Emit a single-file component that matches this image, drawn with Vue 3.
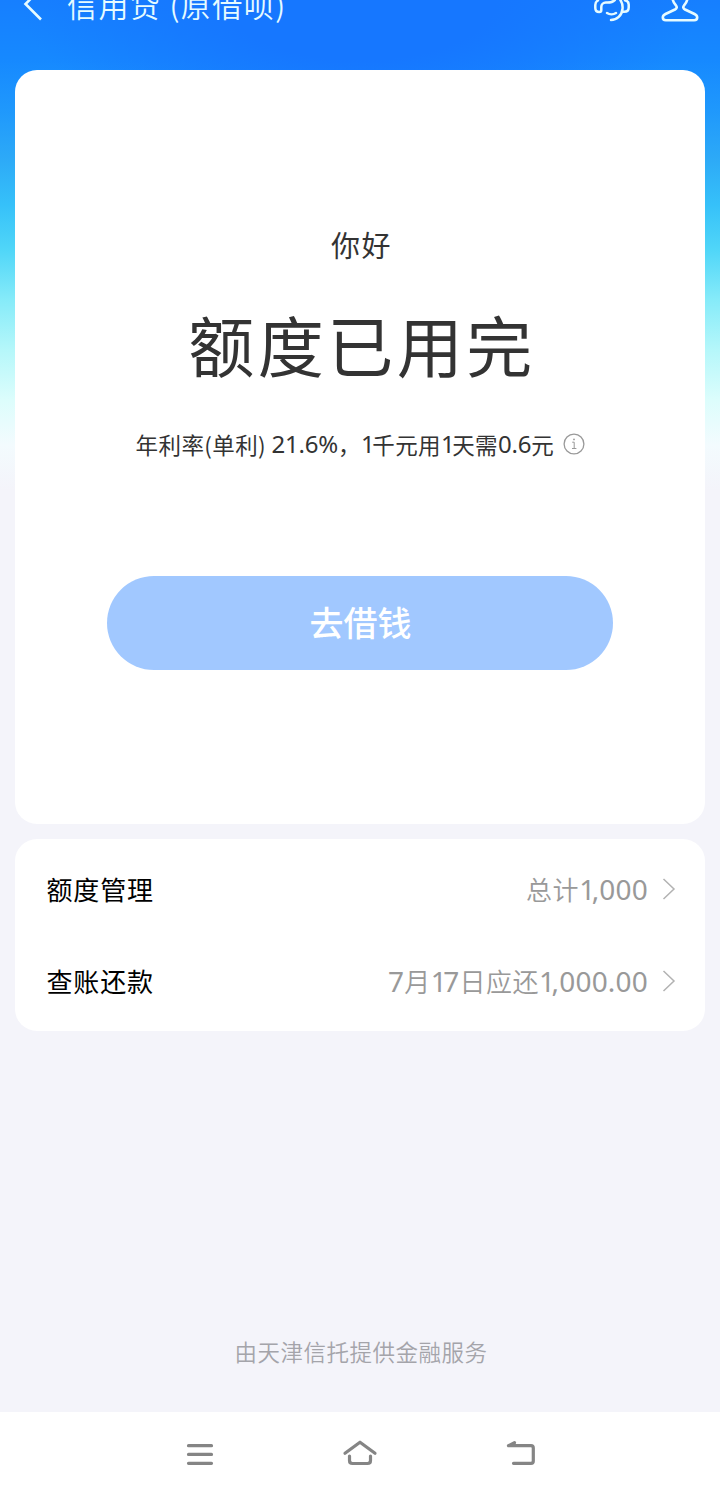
<script setup>
const rows = [
  { label: '额度管理', value: [{ t: '总计' }, { t: '1', one: true }, { t: ',000', num: true }] },
  {
    label: '查账还款',
    value: [
      { t: '7', num: true }, { t: '月' }, { t: '1', one: true }, { t: '7', num: true }, { t: '日应还' },
      { t: '1', one: true }, { t: ',000.00', num: true },
    ],
  },
]
</script>

<template>
  <div class="page">
    <header class="header">
      <div class="bar">
        <svg class="back" width="24" height="40" viewBox="0 0 24 40" fill="none" stroke="#e6fbff" stroke-width="2.6">
          <path d="M18 4.500 2.500 20 18 35.500" />
        </svg>
        <h1 class="title">信用贷 (原借呗)</h1>
        <svg class="service" width="36" height="24" viewBox="0 0 36 24" fill="none" stroke="#e6fbff" stroke-width="2.500" stroke-linecap="round" stroke-linejoin="round">
          <path d="M4 .5C2 1.500 1.300 3 1.300 5v3c0 2.500 1.700 4 4 4 1.500 0 2-.7 2-2V7c0-2.500 2-4.500 4.500-4.500 3 0 6 .5 9-2.500" />
          <path d="M25.500-1.500c2.500 3.500 3.500 6.500 3 10.500-.7 6.500-5.500 11-11.500 11M28.500 11.800h1.700c2.800 0 4.500-1.800 4.500-4.300V4.500c0-2.200-1.300-3.700-3.700-4.200" />
          <path d="M13 13c2.500 1.700 6.500 1.700 9 0" />
        </svg>
        <svg class="person" width="38" height="24" viewBox="0 0 38 24" fill="none" stroke="#e6fbff" stroke-width="2.600" stroke-linejoin="round">
          <path d="M11.500-2c.3 3 1.500 5.500 3.500 7.500 1.300 1.500.8 3-1 4L4.500 14c-2 1-2.700 2-2.700 3.500 0 1.800 1 2.700 3 2.700h28.400c2 0 3-.9 3-2.700 0-1.500-.7-2.500-2.700-3.500L24 9.500c-1.800-1-2.300-2.500-1-4 2-2 3.200-4.500 3.500-7.500" />
        </svg>
      </div>
    </header>

    <main class="content">
      <section class="card quota">
        <p class="hello">你好</p>
        <h2 class="status">额度已用完</h2>
        <p class="rate">
          <span>年利率(单利) </span><span class="digits">21.6%</span><span>，</span><span class="digit-one">1</span><span>千元用</span><span class="digit-one">1</span><span>天需</span><span class="digits">0.6</span><span>元</span>
          <svg class="info" width="22" height="22" viewBox="0 0 22 22" fill="none" stroke="#999" stroke-width="1.300">
            <circle cx="11" cy="11" r="9.900" />
            <path d="M9.200 9.200h2v6.300M9 15.500h4.400" stroke-width="1" />
            <circle cx="11" cy="6.400" r=".9" fill="#999" stroke="none" />
          </svg>
        </p>
        <button class="borrow">去借钱</button>
      </section>

      <section class="card list">
        <div v-for="row in rows" :key="row.label" class="row">
          <span class="label">{{ row.label }}</span>
          <span class="value"><span v-for="(part, i) in row.value" :key="i" :class="{ num: part.num, one: part.one }">{{ part.t }}</span></span>
          <svg class="chevron" width="14" height="24" viewBox="0 0 14 24" fill="none" stroke="#b2b2b2" stroke-width="1.500">
            <path d="M1.500 2 12 12 1.500 22" />
          </svg>
        </div>
      </section>
    </main>

    <p class="provider">由天津信托提供金融服务</p>

    <nav class="navbar">
      <svg width="28" height="28" viewBox="0 0 28 28" stroke="#858585" stroke-width="3.200" stroke-linecap="round">
        <path d="M2.500 5.700h23M2.500 14.400h23M2.500 23.300h23" />
      </svg>
      <svg width="36" height="28" viewBox="0 0 36 28" fill="none" stroke="#858585" stroke-width="3.200" stroke-linecap="round" stroke-linejoin="round">
        <path d="M3 13.200 18 2.200l15 11M7.500 16v4.500q0 3 3 3h15q3 0 3-3V16" />
      </svg>
      <svg width="30" height="28" viewBox="0 0 30 28" fill="none" stroke="#858585" stroke-width="3.200" stroke-linecap="round" stroke-linejoin="round">
        <path d="M8.500 2.700 2.500 5.700H25q2.300 0 2.300 2.300v13q0 2.300-2.300 2.300H7.500" />
      </svg>
    </nav>
  </div>
</template>

<style>
body {
  background: #f4f4fa;
}
</style>

<style scoped>
.page {
  display: flex;
  flex-direction: column;
  width: 720px;
  height: 1497px;
  overflow: hidden;
  font-family: "Noto Sans CJK SC", sans-serif;
  background:
    radial-gradient(ellipse 340px 150px at 50% 0, #1677ff 40%, rgba(22, 119, 255, 0) 100%) no-repeat,
    linear-gradient(#167fff 0, #1689ff 60px, #1f98fc 110px, #2daaf7 160px, #36c1f9 205px, #50d6f8 250px, #86ebf9 300px, #b5f7fa 350px, #dcfdfc 400px, #f3fbfe 445px, #f4f4fa 490px);
}

h1, h2, p {
  margin: 0;
  font-weight: 400;
}

.header {
  flex: none;
  height: 70px;
  overflow: hidden;
}

.bar {
  display: flex;
  align-items: center;
  height: 60px;
  margin-top: -26px;
  padding: 0 21px 0 23px;
}

.back {
  margin-top: -1px;
}

.title {
  margin-left: 20px;
  font-size: 30px;
  font-weight: 350;
  letter-spacing: 1.450px;
  color: #e6fbff;
  white-space: pre;
}

.service,
.person {
  align-self: flex-start;
  margin-top: 26px;
}

.service {
  margin-left: auto;
}

.person {
  margin-left: 31px;
}

.content {
  display: flex;
  flex-direction: column;
  gap: 15px;
  padding: 0 14.600px 0 15.400px;
}

.card {
  border-radius: 22px;
  background: #fff;
}

.quota {
  display: flex;
  flex-direction: column;
  align-items: center;
  height: 754px;
  color: #333;
}

.hello {
  margin-top: 152px;
  padding-left: 2px;
  font-size: 29px;
  line-height: 44px;
  letter-spacing: 1.500px;
}

.status {
  margin-top: 27px;
  padding-left: 3px;
  font-size: 66px;
  line-height: 100px;
  letter-spacing: 3.500px;
}

.rate {
  display: flex;
  align-items: center;
  height: 34px;
  margin-top: 34px;
  font-size: 22.500px;
  line-height: 34px;
  letter-spacing: .4px;
  white-space: pre;
}

.digits,
.digit-one {
  font-family: "Noto Sans", "Noto Sans CJK SC", sans-serif;
  font-size: 24px;
}

.digits {
  letter-spacing: -.2px;
}

.digit-one {
  letter-spacing: -2.500px;
}

.info {
  margin-left: 9px;
}

.borrow {
  width: 506px;
  height: 94px;
  margin-top: 115px;
  padding: 0 0 3px;
  border: 0;
  border-radius: 47px;
  background: #a1c8ff;
  color: #fff;
  font: 500 34px "Noto Sans CJK SC", sans-serif;
}

.list {
  height: 192px;
  padding: 4px 29.400px 4px 31px;
  box-sizing: border-box;
}

.row {
  display: flex;
  align-items: center;
  height: 92px;
  font-size: 26px;
}

.label {
  margin-top: -2px;
  letter-spacing: .9px;
  color: #000;
}

.value {
  margin-top: -1px;
  margin-left: auto;
  margin-right: 14px;
  color: #999;
  font-weight: 350;
  letter-spacing: .5px;
}

.num,
.one {
  font-family: "Noto Sans", "Noto Sans CJK SC", sans-serif;
  font-size: 28px;
  font-weight: 400;
}

.num {
  letter-spacing: .2px;
}

.one {
  letter-spacing: -3.500px;
}

.provider {
  margin-top: 303px;
  padding-left: 2px;
  text-align: center;
  font-size: 22.500px;
  font-weight: 350;
  line-height: 34px;
  letter-spacing: .5px;
  color: #a4a4aa;
}

.navbar {
  display: flex;
  flex: none;
  justify-content: center;
  gap: 128px;
  height: 45px;
  margin-top: auto;
  padding: 28px 0 12px 2px;
  background: #fff;
}
</style>
